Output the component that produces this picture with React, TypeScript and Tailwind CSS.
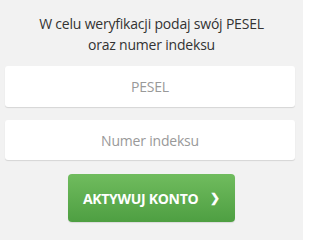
import React from "react";

const App: React.FC = () => {
  return (
    <div
      className="w-[303px] h-[240px] bg-[#f2f2f2] px-[5px] pt-[13px] text-[#333333]"
      style={{ fontFamily: '"Open Sans", "Noto Sans", sans-serif' }}
    >
      {/* Heading */}
      <p className="text-center text-[14px] leading-[21px] tracking-[-0.2px] text-[#333333]">
        W celu weryfikacji podaj swój PESEL
        <br />
        oraz numer indeksu
      </p>

      {/* Inputs */}
      <div className="mt-[11px] flex flex-col gap-[13px]">
        <input
          type="text"
          placeholder="PESEL"
          className="h-[41px] w-[290px] rounded-[3px] bg-white text-center text-[14px] tracking-[-0.2px] text-[#555] placeholder:text-[#999999] shadow-[0_1px_1px_rgba(0,0,0,0.12)] outline-none"
        />
        <input
          type="text"
          placeholder="Numer indeksu"
          className="h-[40px] w-[290px] rounded-[3px] bg-white text-center text-[14px] tracking-[-0.2px] text-[#555] placeholder:text-[#999999] shadow-[0_1px_1px_rgba(0,0,0,0.12)] outline-none"
        />
      </div>

      {/* Button */}
      <div className="mt-[14px] flex justify-center">
        <button
          type="button"
          className="flex h-[48px] w-[167px] items-center justify-center gap-[12px] rounded-[4px] bg-gradient-to-b from-[#70bc5e] to-[#4e9f42] text-[14px] font-bold tracking-[-0.3px] text-white shadow-[0_1px_1px_rgba(0,0,0,0.1)]"
        >
          <span>AKTYWUJ KONTO</span>
          <span className="text-[12px]">❯</span>
        </button>
      </div>
    </div>
  );
};

export default App;
